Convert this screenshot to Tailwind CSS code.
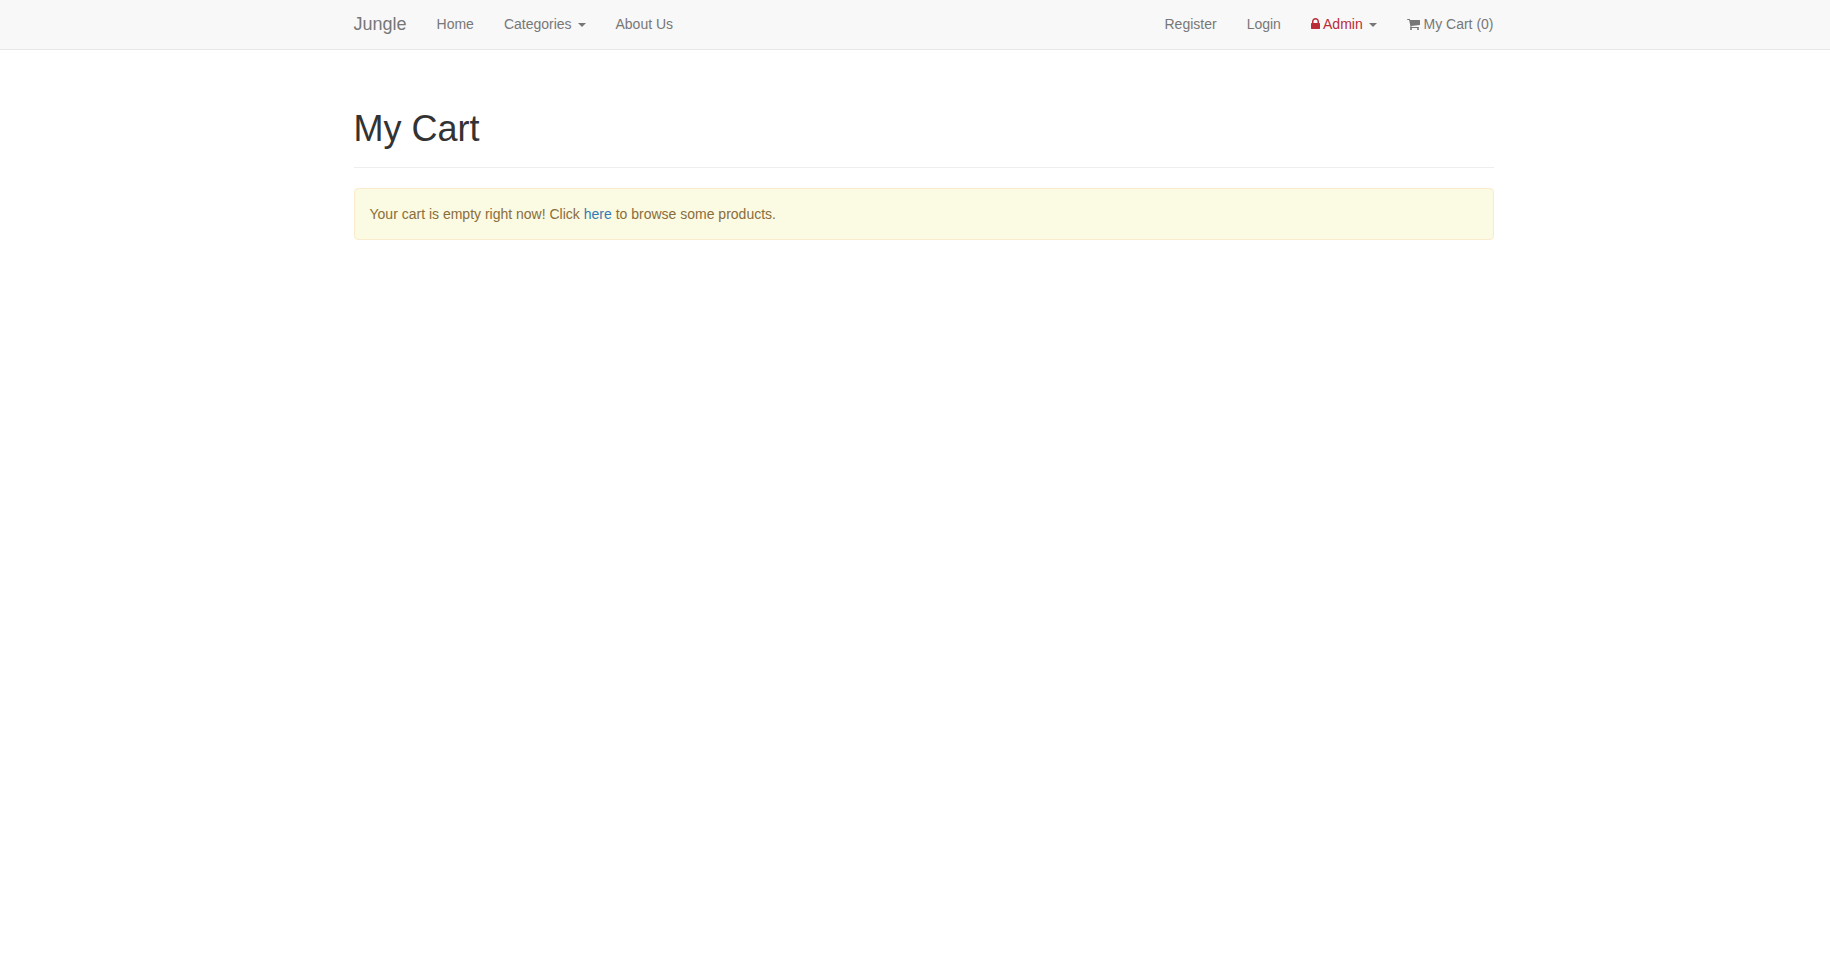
<!DOCTYPE html>
<html lang="en">
<head>
<meta charset="utf-8">
<title>Jungle</title>
<script src="https://cdn.jsdelivr.net/npm/@tailwindcss/browser@4"></script>
</head>
<body class="bg-white font-['Liberation_Sans',Arial,sans-serif] text-[14px] leading-[20px] text-[#333]">
<nav class="h-[50px] border-b border-[#e7e7e7] bg-[#f8f8f8] text-[#777]">
  <div class="ml-[353.5px] flex w-[1140px] justify-between pt-[14px]">
    <div class="flex gap-[30px]">
      <a href="#" class="text-[18px] leading-[20px]">Jungle</a>
      <a href="#">Home</a>
      <a href="#">Categories <span class="ml-[2px] inline-block h-0 w-0 border-x-4 border-t-4 border-x-transparent border-t-[#777] align-middle"></span></a>
      <a href="#">About Us</a>
    </div>
    <div class="flex gap-[30px]">
      <a href="#">Register</a>
      <a href="#">Login</a>
      <a href="#"><span class="text-[#b92c38]"><svg class="inline-block h-[14px] w-[9px] align-[-2px]" viewBox="0 0 1152 1792" fill="currentColor"><path d="M320 768h512V576q0-106-75-181t-181-75-181 75-75 181v192zm832 96v576q0 40-28 68t-68 28H96q-40 0-68-28t-28-68V864q0-40 28-68t68-28h32V576q0-184 132-316t316-132 316 132 132 316v192h32q40 0 68 28t28 68z"/></svg> Admin</span> <span class="ml-[2px] inline-block h-0 w-0 border-x-4 border-t-4 border-x-transparent border-t-[#777] align-middle"></span></a>
      <a href="#"><svg class="inline-block h-[14px] w-[13px] align-[-2px]" viewBox="64 0 1664 1792" fill="currentColor"><path d="M704 1536q0 52-38 90t-90 38-90-38-38-90 38-90 90-38 90 38 38 90zm896 0q0 52-38 90t-90 38-90-38-38-90 38-90 90-38 90 38 38 90zm128-1088v512q0 24-16.5 42.5t-40.5 21.5l-1044 122q13 60 13 70 0 16-24 64h920q26 0 45 19t19 45-19 45-45 19h-1024q-26 0-45-19t-19-45q0-11 8-31.5t16-36 21.5-40 15.5-29.5l-177-823h-204q-26 0-45-19t-19-45 19-45 45-19h256q16 0 28.5 6.5t19.5 15.5 13 24.5 8 26 5.5 29.5 4.5 26h1201q26 0 45 19t19 45z"/></svg> My Cart (0)</a>
    </div>
  </div>
</nav>
<main class="ml-[353.5px] w-[1140px] pt-[59px]">
  <header class="h-[59px] border-b border-[#eee]">
    <h1 class="text-[36px] leading-[40px] font-medium">My Cart</h1>
  </header>
  <div class="mt-5 rounded-[4px] border border-[#faebcc] bg-[#fbfae2] p-[15px] text-[#8a6d3b]">Your cart is empty right now! Click <a href="#" class="text-[#337ab7]">here</a> to browse some products.</div>
</main>
</body>
</html>
